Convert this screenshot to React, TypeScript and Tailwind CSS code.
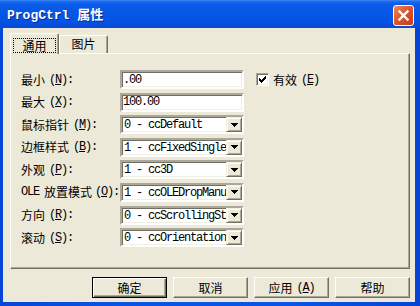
import React from "react";

const mono = "font-['Liberation_Mono',monospace] text-[12px] tracking-[-1.2px]";
const cjk = "font-['Noto_Sans_CJK_SC',sans-serif] text-[12px]";

function Key({ k, colon = true, gap = "ml-[4px]" }: { k: string; colon?: boolean; gap?: string }) {
  return (
    <span className={mono + " " + gap}>
      {"("}
      <span className="underline underline-offset-[1px]">{k}</span>
      {colon ? "):" : ")"}
    </span>
  );
}

function Label({ pre, text, k }: { pre?: string; text: string; k: string }) {
  return (
    <div className="w-[99px] shrink-0 flex items-center whitespace-nowrap">
      {pre && <span className={mono + " mr-[5px]"}>{pre}</span>}
      <span className={cjk}>{text}</span>
      <Key k={k} gap={pre ? "ml-[3px]" : "ml-[4px]"} />
    </div>
  );
}

const sunken =
  "border-2 border-t-[#aca899] border-l-[#aca899] border-r-white border-b-white shadow-[inset_1px_1px_0_#716f64,inset_-1px_-1px_0_#f1efe2]";

function TextBox({ value }: { value: string }) {
  return (
    <div className={"w-[124px] h-[19px] bg-white flex items-center pl-[1px] " + sunken}>
      <span className={mono}>{value}</span>
    </div>
  );
}

function Combo({ value }: { value: string }) {
  return (
    <div className={"w-[124px] h-[19px] bg-white flex items-stretch " + sunken}>
      <div className="flex-1 flex items-center pl-[2px] whitespace-nowrap pt-[1px]">
        <span className={mono}>{value}</span>
      </div>
      <div className="w-[16px] bg-[#ece9d8] border border-t-[#f1efe2] border-l-[#f1efe2] border-r-[#716f64] border-b-[#716f64] shadow-[inset_1px_1px_0_#fff,inset_-1px_-1px_0_#aca899] flex items-center justify-center">
        <svg width="7" height="4" viewBox="0 0 7 4" shapeRendering="crispEdges">
          <path d="M0 0h7v1H0z M1 1h5v1H1z M2 2h3v1H2z M3 3h1v1H3z" fill="#000" />
        </svg>
      </div>
    </div>
  );
}

function Button({ children, def }: { children: React.ReactNode; def?: boolean }) {
  const cls = def
    ? "border border-black shadow-[inset_1px_1px_0_#fff,inset_-1px_-1px_0_#716f64,inset_-2px_-2px_0_#aca899]"
    : "border border-t-white border-l-white border-r-[#716f64] border-b-[#716f64] shadow-[inset_-1px_-1px_0_#aca899]";
  return (
    <div className={"w-[75px] h-[21px] bg-[#ece9d8] flex items-center justify-center " + cls}>
      {children}
    </div>
  );
}

export default function App() {
  return (
    <div className="w-[420px] h-[306px] flex flex-col bg-[linear-gradient(90deg,#0846d8,#0a55e6_30%,#0a55e6_70%,#0744d4)] overflow-hidden text-black leading-none">
      <div className="h-[28px] shrink-0 flex items-center justify-between pl-[7px] pr-[6px] bg-[linear-gradient(180deg,#3d8af5_0%,#1a68ee_6%,#0a5be9_14%,#0657e7_45%,#0452e2_80%,#0a49d4_100%)]">
        <span className="mt-[3px] text-white font-bold text-[13px] font-['Liberation_Mono','Noto_Sans_CJK_SC',monospace] [text-shadow:1px_1px_0_#0b2a8a] whitespace-nowrap">
          ProgCtrl 属性
        </span>
        <div className="mt-[3px] w-[21px] h-[21px] rounded-[3px] border border-white bg-[linear-gradient(135deg,#ee8a60,#dc5630_45%,#c23c14)] flex items-center justify-center">
          <svg width="13" height="13" viewBox="0 0 13 13">
            <path d="M2.5 2.5 L10.5 10.5 M10.5 2.5 L2.5 10.5" stroke="#fff" strokeWidth="2.3" strokeLinecap="square" />
          </svg>
        </div>
      </div>

      <div className="flex-1 ml-[3px] mr-[5px] mb-[4px] bg-[#ece9d8] flex flex-col pl-[7px] pr-[5px] pt-[5px]">
        <div className="h-[20px] flex items-end">
          <div className="relative z-10 w-[49px] h-[21px] -mb-[1px] bg-[#ece9d8] border-l border-t border-white border-r border-r-[#716f64] rounded-tl-[2px] rounded-tr-[2px] shadow-[inset_-1px_0_0_#aca899] flex justify-center pt-[4px]">
            <div className="w-[43px] h-[15px] border border-dotted border-black flex items-center justify-center">
              <span className={cjk}>通用</span>
            </div>
          </div>
          <div className="w-[49px] h-[18px] bg-[#ece9d8] border-l border-t border-white border-r border-r-[#716f64] rounded-tr-[2px] shadow-[inset_-1px_0_0_#aca899] flex items-center justify-center pb-[1px]">
            <span className={cjk}>图片</span>
          </div>
        </div>

        <div className="h-[216px] border border-t-white border-l-white border-r-[#716f64] border-b-[#716f64] shadow-[inset_-1px_-1px_0_#aca899] pl-[10px] pt-[16px] flex flex-col gap-[3.6px]">
          <div className="h-[19px] flex items-center">
            <Label text="最小" k="N" />
            <TextBox value=".00" />
            <div className="ml-[12px] flex items-center">
              <div className="w-[13px] h-[13px] bg-white border border-t-[#aca899] border-l-[#aca899] border-r-white border-b-white shadow-[inset_1px_1px_0_#716f64,inset_-1px_-1px_0_#f1efe2] flex items-center justify-center">
                <svg width="7" height="7" viewBox="0 0 7 7" shapeRendering="crispEdges">
                  <path d="M0 2h1v3H0z M1 3h1v3H1z M2 4h1v3H2z M3 3h1v3H3z M4 2h1v3H4z M5 1h1v3H5z M6 0h1v3H6z" fill="#000" />
                </svg>
              </div>
              <span className={cjk + " ml-[4px]"}>有效</span>
              <Key k="E" colon={false} />
            </div>
          </div>
          <div className="h-[19px] flex items-center">
            <Label text="最大" k="X" />
            <TextBox value="100.00" />
          </div>
          <div className="h-[19px] flex items-center">
            <Label text="鼠标指针" k="M" />
            <Combo value="0 - ccDefault" />
          </div>
          <div className="h-[19px] flex items-center">
            <Label text="边框样式" k="B" />
            <Combo value="1 - ccFixedSingle" />
          </div>
          <div className="h-[19px] flex items-center">
            <Label text="外观" k="P" />
            <Combo value="1 - cc3D" />
          </div>
          <div className="h-[19px] flex items-center">
            <Label pre="OLE" text="放置模式" k="O" />
            <Combo value="1 - ccOLEDropManu" />
          </div>
          <div className="h-[19px] flex items-center">
            <Label text="方向" k="R" />
            <Combo value="0 - ccScrollingSt" />
          </div>
          <div className="h-[19px] flex items-center">
            <Label text="滚动" k="S" />
            <Combo value="0 - ccOrientation" />
          </div>
        </div>

        <div className="mt-[8px] flex justify-end gap-[6px]">
          <Button def>
            <span className={cjk}>确定</span>
          </Button>
          <Button>
            <span className={cjk}>取消</span>
          </Button>
          <Button>
            <span className={cjk}>应用</span>
            <Key k="A" colon={false} />
          </Button>
          <Button>
            <span className={cjk}>帮助</span>
          </Button>
        </div>
      </div>
    </div>
  );
}
